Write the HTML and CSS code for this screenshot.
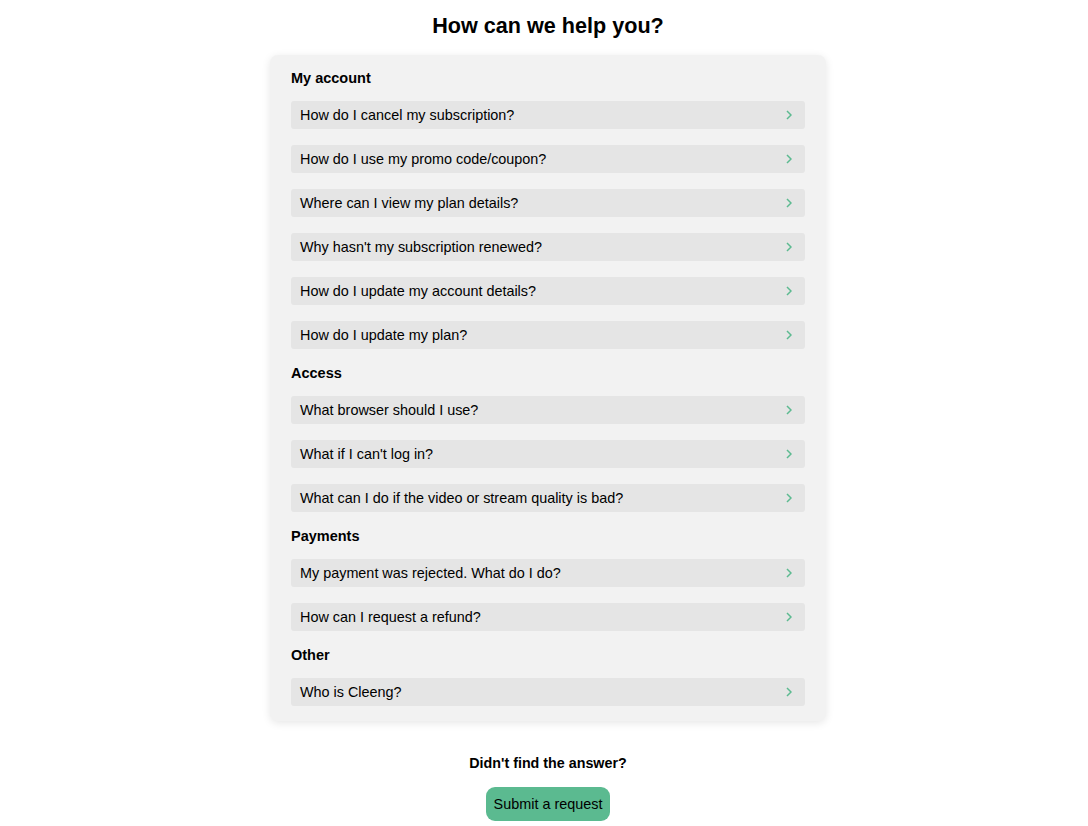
FILE: index.html
```html
<!DOCTYPE html>
<html lang="en">
<head>
  <meta charset="UTF-8" />
  <meta name="viewport" content="width=device-width, initial-scale=1.0"/>
  <title>Help Center</title>
  <link rel="stylesheet" href="styles.css">
</head>
<body>

  <h1 class="title">How can we help you?</h1>

  <main class="faq-card">

    <h2 class="group-title">My account</h2>
    <a class="faq-item" href="#">How do I cancel my subscription?<svg class="chevron" viewBox="0 0 6 10"><path d="M1 1l4 4-4 4"/></svg></a>
    <a class="faq-item" href="#">How do I use my promo code/coupon?<svg class="chevron" viewBox="0 0 6 10"><path d="M1 1l4 4-4 4"/></svg></a>
    <a class="faq-item" href="#">Where can I view my plan details?<svg class="chevron" viewBox="0 0 6 10"><path d="M1 1l4 4-4 4"/></svg></a>
    <a class="faq-item" href="#">Why hasn't my subscription renewed?<svg class="chevron" viewBox="0 0 6 10"><path d="M1 1l4 4-4 4"/></svg></a>
    <a class="faq-item" href="#">How do I update my account details?<svg class="chevron" viewBox="0 0 6 10"><path d="M1 1l4 4-4 4"/></svg></a>
    <a class="faq-item" href="#">How do I update my plan?<svg class="chevron" viewBox="0 0 6 10"><path d="M1 1l4 4-4 4"/></svg></a>

    <h2 class="group-title">Access</h2>
    <a class="faq-item" href="#">What browser should I use?<svg class="chevron" viewBox="0 0 6 10"><path d="M1 1l4 4-4 4"/></svg></a>
    <a class="faq-item" href="#">What if I can't log in?<svg class="chevron" viewBox="0 0 6 10"><path d="M1 1l4 4-4 4"/></svg></a>
    <a class="faq-item" href="#">What can I do if the video or stream quality is bad?<svg class="chevron" viewBox="0 0 6 10"><path d="M1 1l4 4-4 4"/></svg></a>

    <h2 class="group-title">Payments</h2>
    <a class="faq-item" href="#">My payment was rejected. What do I do?<svg class="chevron" viewBox="0 0 6 10"><path d="M1 1l4 4-4 4"/></svg></a>
    <a class="faq-item" href="#">How can I request a refund?<svg class="chevron" viewBox="0 0 6 10"><path d="M1 1l4 4-4 4"/></svg></a>

    <h2 class="group-title">Other</h2>
    <a class="faq-item" href="#">Who is Cleeng?<svg class="chevron" viewBox="0 0 6 10"><path d="M1 1l4 4-4 4"/></svg></a>

  </main>

  <footer class="request">
    <p class="request-text">Didn't find the answer?</p>
    <button class="request-btn">Submit a request</button>
  </footer>

</body>
</html>
```

FILE: styles.css
```css
body {
  font-family: "Liberation Sans", Arial, sans-serif;
  margin: 0;
  padding: 0 0 0 8px;
  background: #fff;
  color: #000;
  display: flex;
  flex-direction: column;
  align-items: center;
}

.title {
  font-size: 21.6px;
  font-weight: bold;
  line-height: 24px;
  margin: 14px 0 17px;
}

.faq-card {
  width: 556px;
  box-sizing: border-box;
  background: #f2f2f2;
  border-radius: 8px;
  box-shadow: 0 2px 8px rgba(0,0,0,0.1);
  padding: 15px 21px 15px;
  display: flex;
  flex-direction: column;
  gap: 16px;
}

.group-title {
  font-size: 14.5px;
  font-weight: bold;
  line-height: 16px;
  margin: 0 0 -1px;
}

.faq-item {
  display: flex;
  justify-content: space-between;
  align-items: center;
  height: 28px;
  padding: 0 13px 0 9px;
  background: #e5e5e5;
  border-radius: 3px;
  color: #000;
  text-decoration: none;
  font-size: 14.4px;
}

.chevron {
  width: 6px;
  height: 10px;
  fill: none;
  stroke: #5cba90;
  stroke-width: 1.5;
}

.request {
  display: flex;
  flex-direction: column;
  align-items: center;
  margin-top: 34px;
}

.request-text {
  font-size: 14.3px;
  font-weight: bold;
  line-height: 16px;
  margin: 0 0 16px;
}

.request-btn {
  font-family: inherit;
  font-size: 14.4px;
  color: #000;
  background: #5bba90;
  border: none;
  border-radius: 9px;
  height: 34px;
  padding: 0 8px;
  cursor: pointer;
}
```
